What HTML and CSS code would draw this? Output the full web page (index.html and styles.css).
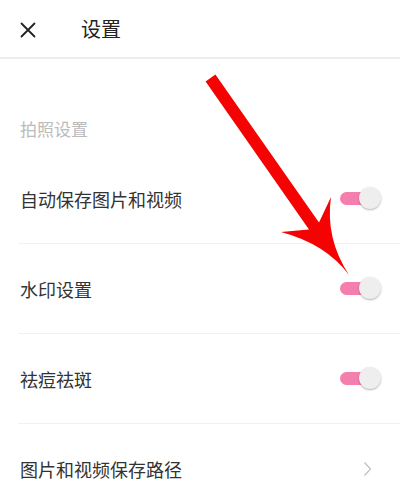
FILE: index.html
```html
<!DOCTYPE html>
<html lang="zh-CN">
<head>
<meta charset="utf-8">
<title>设置</title>
<link rel="stylesheet" href="styles.css">
</head>
<body>
<div class="page">
  <header class="topbar">
    <svg class="close" width="16" height="16" viewBox="0 0 16 16"><path d="M1.5 1.5 L14.5 14.5 M14.5 1.5 L1.5 14.5" stroke="#222" stroke-width="1.8" fill="none" stroke-linecap="round"/></svg>
    <h1 class="title">设置</h1>
  </header>
  <div class="section-label">拍照设置</div>
  <ul class="list">
    <li class="row"><span class="row-text">自动保存图片和视频</span><span class="toggle"><span class="track"></span><span class="knob"></span></span></li>
    <li class="row"><span class="row-text">水印设置</span><span class="toggle"><span class="track"></span><span class="knob"></span></span></li>
    <li class="row"><span class="row-text">祛痘祛斑</span><span class="toggle"><span class="track"></span><span class="knob"></span></span></li>
    <li class="row row-link"><span class="row-text">图片和视频保存路径</span><svg class="chevron" width="9" height="16" viewBox="0 0 9 16"><path d="M1.5 1.5 L7.5 8 L1.5 14.5" stroke="#c4c4c4" stroke-width="1.4" fill="none"/></svg></li>
  </ul>
  <svg class="arrow" width="400" height="488" viewBox="0 0 400 488">
    <path d="M205.6 81.4 L215.4 74.6 L319 222.6 L331 197 Q325 238 349 275 Q326 244 281 232 L309 229.4 Z" fill="#f50202"/>
  </svg>
</div>
</body>
</html>
```
FILE: styles.css
```css
html, body {
  margin: 0;
  padding: 0;
  background: #fff;
}
body {
  font-family: "Noto Sans CJK SC", "Noto Sans", sans-serif;
  color: #333;
  overflow: hidden;
}
.page {
  position: relative;
  width: 400px;
  height: 488px;
  overflow: hidden;
}
.topbar {
  height: 57px;
  display: flex;
  align-items: center;
  border-bottom: 2px solid #ededed;
  padding-left: 20px;
}
.close {
  display: block;
  margin-top: 2px;
}
.title {
  margin: 0 0 0 45px;
  font-size: 20px;
  font-weight: 400;
  color: #222;
  line-height: 24px;
}
.section-label {
  padding: 58px 0 13px 20px;
  font-size: 17px;
  line-height: 24px;
  color: #bbb;
}
.list {
  list-style: none;
  margin: 0;
  padding: 0;
}
.row {
  margin-left: 18px;
  padding: 0 19px 0 2px;
  height: 89px;
  display: flex;
  align-items: center;
  justify-content: space-between;
  border-bottom: 1px solid #f1f1f1;
}
.row-link {
  padding-right: 28px;
  border-bottom: none;
}
.row-text {
  font-size: 18px;
  line-height: 24px;
  color: #333;
}
.toggle {
  position: relative;
  width: 41px;
  height: 23px;
  display: block;
}
.track {
  position: absolute;
  left: 0;
  top: 5px;
  width: 34px;
  height: 13px;
  border-radius: 7px;
  background: #f47fae;
}
.knob {
  position: absolute;
  right: 0;
  top: 0;
  width: 22px;
  height: 22px;
  border-radius: 50%;
  background: #eeeeee;
  box-shadow: 0 1px 2px rgba(0,0,0,0.3);
}
.chevron {
  display: block;
}
.arrow {
  position: absolute;
  left: 0;
  top: 0;
  pointer-events: none;
}
```
